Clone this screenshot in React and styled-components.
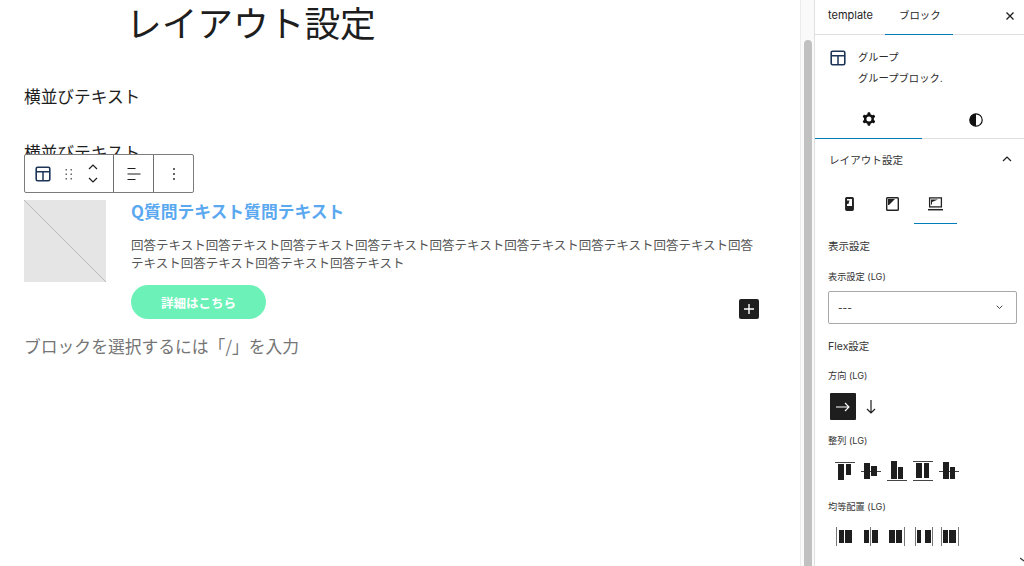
import React from 'react';
import styled, { createGlobalStyle } from 'styled-components';

const Global = createGlobalStyle`
  html, body { margin: 0; padding: 0; height: 100%; overflow: hidden; background: #fff; }
  body { font-family: "Inter", "Noto Sans CJK JP", sans-serif; color: #1e1e1e; }
  #root { height: 100%; }
`;

const Page = styled.div`
  display: flex;
  width: 1024px;
  height: 566px;
  overflow: hidden;
`;

const Canvas = styled.main`
  position: relative;
  flex: 0 0 800px;
  height: 566px;
  overflow: hidden;
`;

const Title = styled.h1`
  margin: 0;
  padding: 0 0 0 126px;
  height: 44px;
  font: 400 35.7px/44px "Noto Sans CJK JP", sans-serif;
  color: #1e1e1e;
`;

const Para = styled.p`
  margin: 0;
  padding-left: 24px;
  height: ${p => p.$h}px;
  font: 400 16.7px/${p => p.$h}px "Noto Sans CJK JP", sans-serif;
  color: #1e1e1e;
`;

const FirstPara = styled(Para)`
  margin-top: 30px;
`;

const SecondPara = styled(Para)`
  margin-top: 22px;
`;

const Toolbar = styled.div`
  position: absolute;
  left: 24px;
  top: 154px;
  width: 170px;
  height: 39px;
  display: flex;
  box-sizing: border-box;
  border: 1px solid #7c7c7c;
  border-radius: 2px;
  background: #fff;
`;

const ToolGroup = styled.div`
  display: flex;
  align-items: center;
  justify-content: ${p => (p.$start ? 'flex-start' : 'center')};
  padding-left: ${p => (p.$start ? 10 : 0)}px;
  width: ${p => p.$w}px;
  gap: ${p => p.$gap || 0}px;
  border-right: ${p => (p.$last ? 'none' : '1px solid #6f6f6f')};
  flex: 0 0 auto;
  box-sizing: border-box;
`;

const Mover = styled.div`
  display: flex;
  flex-direction: column;
  gap: 7px;
  margin-left: 1px;
`;

const Card = styled.section`
  display: flex;
  gap: 25px;
  margin: 36px 0 0 24px;
  width: 735px;
`;

const Thumb = styled.div`
  flex: 0 0 82px;
  height: 82px;
  background: #e5e5e5;
`;

const CardBody = styled.div`
  flex: 1;
  min-width: 0;
`;

const Question = styled.h2`
  margin: 0;
  font: 700 16.8px/22px "Noto Sans CJK JP", sans-serif;
  color: #5aa8f0;
`;

const Answer = styled.p`
  margin: 14px 0 0;
  font: 400 12.5px/18px "Noto Sans CJK JP", sans-serif;
  color: #555;
`;

const Cta = styled.button`
  display: block;
  width: 135px;
  height: 34px;
  margin-top: 13px;
  border: 0;
  border-radius: 17px;
  background: #6cf2b8;
  color: #fff;
  font: 700 12.5px/34px "Noto Sans CJK JP", sans-serif;
`;

const AddButton = styled.button`
  position: absolute;
  left: 739px;
  top: 299px;
  width: 20px;
  height: 20px;
  padding: 0;
  border: 0;
  border-radius: 2px;
  background: #1e1e1e;
  display: flex;
  align-items: center;
  justify-content: center;
`;

const Placeholder = styled.p`
  margin: 15px 0 0 24px;
  font: 400 16.8px/24px "Noto Sans CJK JP", sans-serif;
  color: #757575;
`;

const ScrollTrack = styled.div`
  flex: 0 0 15px;
  height: 566px;
  box-sizing: border-box;
  padding: 40px 2px 0 3px;
  background: #fafafa;
  border-left: 1px solid #ececec;
  border-right: 1px solid #e0e0e0;
`;

const ScrollThumb = styled.div`
  height: 100%;
  background: #c1c1c1;
  border-radius: 4px 4px 0 0;
`;

const Sidebar = styled.aside`
  position: relative;
  flex: 1;
  height: 566px;
  overflow: hidden;
  min-width: 0;
`;

const TabRow = styled.div`
  display: flex;
  height: 35px;
  box-sizing: border-box;
  border-bottom: 1px solid #e0e0e0;
`;

const Tab = styled.div`
  width: ${p => p.$w}px;
  height: 35px;
  box-sizing: border-box;
  padding-left: ${p => p.$pad}px;
  font-size: ${p => p.$size}px;
  line-height: 31px;
  color: #1e1e1e;
  border-bottom: ${p => (p.$active ? '1.5px solid #007cba' : 'none')};
`;

const Close = styled.div`
  margin-left: auto;
  width: 28px;
  display: flex;
  align-items: center;
  justify-content: center;
  height: 32px;
`;

const BlockCard = styled.div`
  display: flex;
  gap: 12px;
  box-sizing: border-box;
  padding: 12px 0 0 15px;
  height: 65px;
`;

const BlockIcon = styled.div`
  margin-top: 3px;
  height: 16px;
`;

const BlockName = styled.div`
  font-size: 10.3px;
  line-height: 21px;
  color: #2a2a2a;
`;

const InspectorTabs = styled.div`
  display: flex;
  height: 39px;
  border-bottom: 1px solid #e0e0e0;
  box-sizing: border-box;
`;

const InspectorTab = styled.div`
  flex: 0 0 107px;
  height: 39px;
  display: flex;
  align-items: center;
  justify-content: center;
  box-sizing: border-box;
  border-bottom: ${p => (p.$active ? '1.5px solid #007cba' : 'none')};
`;

const PanelHead = styled.div`
  display: flex;
  align-items: center;
  justify-content: space-between;
  padding: 0 12px 0 14px;
  height: 40px;
  font-size: 10.6px;
  color: #333;
`;

const Devices = styled.div`
  display: flex;
  box-sizing: border-box;
  padding: 7px 0 0 13px;
  height: 45px;
`;

const Device = styled.div`
  width: 43px;
  height: 38px;
  box-sizing: border-box;
  display: flex;
  align-items: center;
  justify-content: center;
  padding-bottom: 2px;
  border-bottom: ${p => (p.$active ? '1.5px solid #007cba' : '1.5px solid transparent')};
`;

const Heading = styled.div`
  margin: ${p => p.$mt}px 0 0 13px;
  font-size: 10.5px;
  line-height: 14px;
  color: #333;
`;

const SmallLabel = styled.div`
  margin: ${p => p.$mt}px 0 0 13px;
  font-size: 9.2px;
  line-height: 12px;
  color: #333;
`;

const SelectBox = styled.div`
  margin: 8px 0 0 13px;
  width: 189px;
  height: 33px;
  box-sizing: border-box;
  border: 1px solid #a8a8a8;
  border-radius: 2px;
  padding: 0 13px 0 9px;
  display: flex;
  align-items: center;
  justify-content: space-between;
  font-size: 10px;
  color: #1e1e1e;
`;

const IconRow = styled.div`
  display: flex;
  align-items: center;
  margin: ${p => p.$mt}px 0 0 ${p => p.$ml}px;
  gap: ${p => p.$gap}px;
`;

const DirActive = styled.div`
  width: 26px;
  height: 27px;
  border-radius: 1px;
  background: #1e1e1e;
  display: flex;
  align-items: center;
  justify-content: center;
`;

const Corner = styled.div`
  position: absolute;
  right: 0;
  bottom: 4px;
  width: 4px;
  height: 5px;
`;

const Icon = ({ w = 24, h = 24, vb, children }) => (
  <svg width={w} height={h} viewBox={vb || `0 0 ${w} ${h}`} fill="none" style={{ display: 'block' }}>{children}</svg>
);

const GroupIcon = () => (
  <Icon w={16} h={16}>
    <rect x="1.2" y="1.2" width="13.6" height="13.6" rx="1.5" stroke="#1c3557" strokeWidth="1.6" />
    <path d="M1 5.7h14M8 5.7V15" stroke="#1c3557" strokeWidth="1.5" />
  </Icon>
);

const Drag = () => (
  <Icon w={8} h={12}>
    {[1, 5.5, 10].map(y => [0.5, 5.5].map(x => <rect key={`${x}${y}`} x={x} y={y} width="1.5" height="1.5" fill="#666" />))}
  </Icon>
);

const Chev = ({ up, w = 10, h = 6 }) => (
  <Icon w={w} h={h} vb="0 0 10 6">
    <path d={up ? 'M1 5l4-4 4 4' : 'M1 1l4 4 4-4'} stroke="#1e1e1e" strokeWidth="1.2" />
  </Icon>
);

const AlignIcon = () => (
  <Icon w={16} h={14}>
    <path d="M1.5 1.5h8M1.5 7h13M1.5 12.5h8" stroke="#1e1e1e" strokeWidth="1.2" />
  </Icon>
);

const More = () => (
  <Icon w={4} h={14}>
    <circle cx="2" cy="2" r="1" fill="#333" />
    <circle cx="2" cy="7" r="1" fill="#333" />
    <circle cx="2" cy="12" r="1" fill="#333" />
  </Icon>
);

const Gear = () => (
  <Icon w={20} h={20} vb="0 0 24 24">
    <path fill="#111" fillRule="evenodd" clipRule="evenodd" d="M10.289 4.836A1 1 0 0111.275 4h1.306a1 1 0 01.987.836l.244 1.466c.787.26 1.503.679 2.108 1.218l1.393-.522a1 1 0 011.216.437l.653 1.13a1 1 0 01-.23 1.273l-1.148.944a6.025 6.025 0 010 2.435l1.149.946a1 1 0 01.23 1.272l-.653 1.13a1 1 0 01-1.216.437l-1.394-.522c-.605.54-1.32.958-2.108 1.218l-.244 1.466a1 1 0 01-.987.836h-1.306a1 1 0 01-.986-.836l-.244-1.466a5.995 5.995 0 01-2.108-1.218l-1.394.522a1 1 0 01-1.217-.436l-.653-1.131a1 1 0 01.23-1.272l1.149-.946a6.026 6.026 0 010-2.435l-1.148-.944a1 1 0 01-.23-1.272l.653-1.131a1 1 0 011.217-.437l1.393.522a5.994 5.994 0 012.108-1.218l.244-1.466zM14.929 12a3 3 0 11-6 0 3 3 0 016 0z" />
  </Icon>
);

const Contrast = () => (
  <Icon w={14} h={14}>
    <circle cx="7" cy="7" r="6.2" stroke="#111" strokeWidth="1.2" />
    <path d="M7 .8a6.2 6.2 0 0 0 0 12.4z" fill="#111" />
  </Icon>
);

const Phone = () => (
  <Icon w={9} h={14}>
    <rect x="0.7" y="0.7" width="7.6" height="12.6" rx="1" fill="#222" stroke="#222" strokeWidth="1.2" />
    <path d="M2 2h5v7H2V7h1.4L4.5 3.5H2z" fill="#fff" />
  </Icon>
);

const Tablet = () => (
  <Icon w={13} h={14}>
    <rect x="0.7" y="0.7" width="11.6" height="12.6" rx="0.8" stroke="#222" strokeWidth="1.4" />
    <path d="M2 2h7L3 8H2z" fill="#222" />
  </Icon>
);

const Laptop = () => (
  <Icon w={15} h={14}>
    <rect x="1.6" y="0.9" width="11.8" height="9" stroke="#222" strokeWidth="1.3" />
    <path d="M3 2.4h7L4 5v2.5H3z" fill="#222" />
    <path d="M0 12.7h15" stroke="#222" strokeWidth="1.5" />
  </Icon>
);

// 整列 icons: guide line plus two bars
const AlignGlyph = ({ d, bars }) => (
  <Icon w={20} h={21}>
    <path d={d} stroke="#444" strokeWidth="1" />
    {bars.map((b, i) => <rect key={i} x={b[0]} y={b[1]} width={b[2]} height={b[3]} fill="#1e1e1e" />)}
  </Icon>
);

// 均等配置 icons: vertical guides plus two bars
const JustifyGlyph = ({ d, bars }) => (
  <Icon w={20} h={19}>
    <path d={d} stroke="#777" strokeWidth="1" />
    {bars.map((b, i) => <rect key={i} x={b[0]} y="3" width={b[1]} height="13" fill="#1e1e1e" />)}
  </Icon>
);

const alignItems = [
  { d: 'M0 2.5h20', bars: [[3, 4, 6, 16], [11, 4, 5, 11]] },
  { d: 'M0 11.5h20', bars: [[3, 3, 6, 16], [10, 6, 6, 10]] },
  { d: 'M0 20.5h20', bars: [[4, 1, 6, 18], [11, 7, 5, 12]] },
  { d: 'M0 1.5h20M0 20.5h20', bars: [[3, 3, 6, 15], [11, 3, 5, 15]] },
  { d: 'M0 11.5h20', bars: [[4, 2, 6, 17], [11, 7, 5, 12]] },
];

const justifyItems = [
  { d: 'M0.5 0v19', bars: [[3, 5], [9, 7]] },
  { d: 'M8.5 0v19', bars: [[2, 5], [10, 6]] },
  { d: 'M16.5 0v19', bars: [[1, 6], [8, 6]] },
  { d: 'M1.5 0v19M18.5 0v19', bars: [[3, 4], [11, 6]] },
  { d: 'M1.5 0v19M18.5 0v19', bars: [[3, 5], [9, 7]] },
];

export default function App() {
  return (
    <Page>
      <Global />
      <Canvas>
        <Title>レイアウト設定</Title>
        <FirstPara $h={44}>横並びテキスト</FirstPara>
        <SecondPara $h={24}>横並びテキスト</SecondPara>
        <Toolbar>
          <ToolGroup $w={89} $gap={14} $start>
            <GroupIcon />
            <Drag />
            <Mover><Chev up /><Chev /></Mover>
          </ToolGroup>
          <ToolGroup $w={40}><AlignIcon /></ToolGroup>
          <ToolGroup $w={39} $last><More /></ToolGroup>
        </Toolbar>
        <Card>
          <Thumb>
            <svg width="82" height="82" style={{ display: 'block' }}><path d="M0 0L82 82" stroke="#b9b9b9" strokeWidth="1" /></svg>
          </Thumb>
          <CardBody>
            <Question>Q質問テキスト質問テキスト</Question>
            <Answer>回答テキスト回答テキスト回答テキスト回答テキスト回答テキスト回答テキスト回答テキスト回答テキスト回答テキスト回答テキスト回答テキスト回答テキスト</Answer>
            <Cta>詳細はこちら</Cta>
          </CardBody>
        </Card>
        <AddButton>
          <svg width="12" height="12"><path d="M6 1v10M1 6h10" stroke="#fff" strokeWidth="1.4" /></svg>
        </AddButton>
        <Placeholder>ブロックを選択するには「/」を入力</Placeholder>
      </Canvas>
      <ScrollTrack><ScrollThumb /></ScrollTrack>
      <Sidebar>
        <TabRow>
          <Tab $w={70} $pad={13} $size={11}>template</Tab>
          <Tab $w={68} $pad={14} $size={10.4} $active>ブロック</Tab>
          <Close>
            <svg width="10" height="10"><path d="M1.5 1.5l7 7M8.5 1.5l-7 7" stroke="#1e1e1e" strokeWidth="1.3" /></svg>
          </Close>
        </TabRow>
        <BlockCard>
          <BlockIcon><GroupIcon /></BlockIcon>
          <div>
            <BlockName>グループ</BlockName>
            <BlockName>グループブロック.</BlockName>
          </div>
        </BlockCard>
        <InspectorTabs>
          <InspectorTab $active><Gear /></InspectorTab>
          <InspectorTab><Contrast /></InspectorTab>
        </InspectorTabs>
        <PanelHead>レイアウト設定<Chev up /></PanelHead>
        <Devices>
          <Device><Phone /></Device>
          <Device><Tablet /></Device>
          <Device $active><Laptop /></Device>
        </Devices>
        <Heading $mt={16}>表示設定</Heading>
        <SmallLabel $mt={17}>表示設定 (LG)</SmallLabel>
        <SelectBox>---<Chev w={7} h={4.2} /></SelectBox>
        <Heading $mt={16}>Flex設定</Heading>
        <SmallLabel $mt={16}>方向 (LG)</SmallLabel>
        <IconRow $mt={11} $ml={15} $gap={9}>
          <DirActive>
            <svg width="16" height="12"><path d="M1 6h13M10 2l4 4-4 4" stroke="#fff" strokeWidth="1.1" fill="none" /></svg>
          </DirActive>
          <svg width="12" height="16"><path d="M6 1v13M2 10l4 4 4-4" stroke="#1e1e1e" strokeWidth="1.2" fill="none" /></svg>
        </IconRow>
        <SmallLabel $mt={15}>整列 (LG)</SmallLabel>
        <IconRow $mt={13} $ml={20} $gap={6}>
          {alignItems.map((g, i) => <AlignGlyph key={i} {...g} />)}
        </IconRow>
        <SmallLabel $mt={20}>均等配置 (LG)</SmallLabel>
        <IconRow $mt={14} $ml={21} $gap={6}>
          {justifyItems.map((g, i) => <JustifyGlyph key={i} {...g} />)}
        </IconRow>
        <Corner>
          <svg width="4" height="5" style={{ display: 'block' }}><path d="M0 1l4 3" stroke="#333" strokeWidth="1.2" fill="none" /></svg>
        </Corner>
      </Sidebar>
    </Page>
  );
}
